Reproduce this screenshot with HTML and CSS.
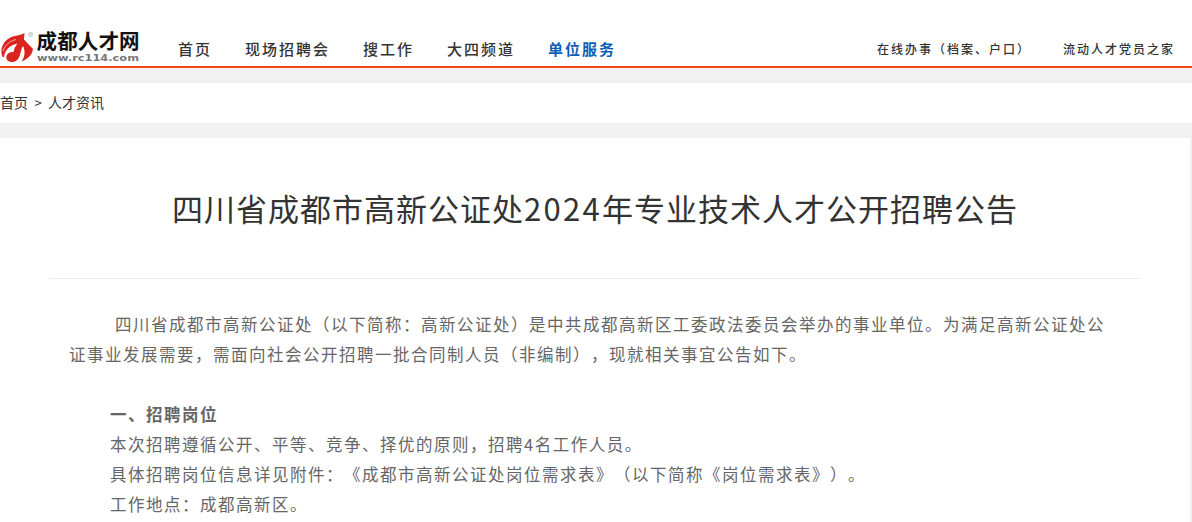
FILE: index.html
```
<!DOCTYPE html>
<html lang="zh-CN">
<head>
  <meta charset="UTF-8" />
  <title>四川省成都市高新公证处2024年专业技术人才公开招聘公告</title>
  <link rel="stylesheet" href="styles.css">
</head>

<body>
  <!-- Header -->
  <div class="header">
    <a href="#" class="logo">
      <svg width="142" height="48" viewBox="0 -12 142 48">
        <path fill="#d9251d" d="M2.500 27 C-1 19 4 8 15 6 C18 5.500 21 5 24.500 3 L24 9.500 L33 19 C32 25 28 29 21.500 31.500 C25 27 25.500 21 23 16 C21.500 18 21 21 20 25 C18.500 30 15 32.500 11.500 32 C7.500 31.500 5.500 29 6.500 26 C7.500 23 10.500 21.500 13.500 22 C14 19 15.500 16 17.500 13.500 C11 15 5 19 4 27 Z"/>
        <path fill="none" stroke="#fff" stroke-width=".6" d="M3 21 C5 15 10 11 16 9.500"/>
        <circle cx="30.500" cy="4.500" r="2.200" fill="none" stroke="#aaa" stroke-width=".6"/>
        <text class="logo-reg" x="29.300" y="6">R</text>
        <text class="logo-name" x="36.500" y="18.500" textLength="103">成都人才网</text>
        <text class="logo-url" x="37" y="31" textLength="102" lengthAdjust="spacingAndGlyphs">www.rc114.com</text>
      </svg>
    </a>
    <ul class="nav-menu">
      <li><a href="#">首页</a></li>
      <li><a href="#">现场招聘会</a></li>
      <li><a href="#">搜工作</a></li>
      <li><a href="#">大四频道</a></li>
      <li><a href="#" class="active">单位服务</a></li>
    </ul>
    <div class="header-right">
      <a href="#">在线办事（档案、户口）</a>
      <a href="#">流动人才党员之家</a>
    </div>
  </div>

  <!-- Breadcrumb -->
  <div class="breadcrumb">
    <a href="#">首页</a><span>&gt;</span><a href="#">人才资讯</a>
  </div>

  <!-- Article -->
  <div class="article">
    <h1>四川省成都市高新公证处<span class="year">2024</span>年专业技术人才公开招聘公告</h1>
    <div class="article-content">
      <p class="intro">四川省成都市高新公证处（以下简称：高新公证处）是中共成都高新区工委政法委员会举办的事业单位。为满足高新公证处公证事业发展需要，需面向社会公开招聘一批合同制人员（非编制），现就相关事宜公告如下。</p>
      <p class="section-title">一、招聘岗位</p>
      <p>本次招聘遵循公开、平等、竞争、择优的原则，招聘4名工作人员。</p>
      <p>具体招聘岗位信息详见附件：《成都市高新公证处岗位需求表》（以下简称《岗位需求表》）。</p>
      <p>工作地点：成都高新区。</p>
    </div>
  </div>
</body>
</html>
```
FILE: styles.css
```
:root {
  --primary-color: #ed4a12;
  --link-active: #0b5eb5;
  --background-color: #f1f1f2;
  --text-color: #333;
}

* {
  box-sizing: border-box;
}

body {
  margin: 0;
  font-family: 'Noto Sans CJK SC', sans-serif;
  text-spacing-trim: space-all;
  background: var(--background-color);
  color: var(--text-color);
}

a {
  color: inherit;
  text-decoration: none;
}

.header {
  height: 68px;
  display: flex;
  align-items: flex-end;
  background: white;
  border-bottom: 2px solid var(--primary-color);
}

.logo {
  width: 179px;
  height: 48px;
}

.logo svg {
  display: block;
}

.logo-name {
  font-size: 20.5px;
  font-weight: bold;
  fill: #111;
}

.logo-url {
  font-family: 'DejaVu Sans', sans-serif;
  font-size: 9px;
  font-weight: bold;
  fill: #777;
}

.logo-reg {
  font-size: 4px;
  fill: #999;
}

.nav-menu {
  display: flex;
  gap: 33px;
  list-style: none;
  margin: 0 0 0 -1px;
  padding: 0 0 6px;
  font-size: 15px;
  font-weight: 500;
  line-height: 22px;
  letter-spacing: 2px;
}

.nav-menu .active {
  color: var(--link-active);
  font-weight: bold;
}

.header-right {
  display: flex;
  gap: 32px;
  margin-left: auto;
  padding: 0 17px 6px 0;
  font-size: 12px;
  font-weight: 500;
  line-height: 22px;
  letter-spacing: 2px;
}

.breadcrumb {
  height: 40px;
  margin: 15px 0;
  background: white;
  font-size: 14px;
  line-height: 38px;
}

.breadcrumb span {
  display: inline-block;
  width: 20px;
  text-align: center;
  font-size: 13px;
}

.article {
  width: 1190px;
  height: 384px;
  padding: 0 49px;
  background: white;
}

h1 {
  height: 141px;
  margin: 0;
  border-bottom: 1px solid #eee;
  font-size: 31px;
  font-weight: normal;
  line-height: 140px;
  letter-spacing: 1px;
  text-align: center;
}

.year {
  letter-spacing: 2.3px;
}

.article-content {
  padding: 30px 20px 0;
  font-size: 16.5px;
  line-height: 30px;
  letter-spacing: 1.5px;
  color: #666;
}

p {
  margin: 0;
  padding-left: 41px;
}

.intro {
  margin-bottom: 30px;
  padding-left: 0;
  text-indent: 46px;
}

.section-title {
  font-weight: bold;
}
```
